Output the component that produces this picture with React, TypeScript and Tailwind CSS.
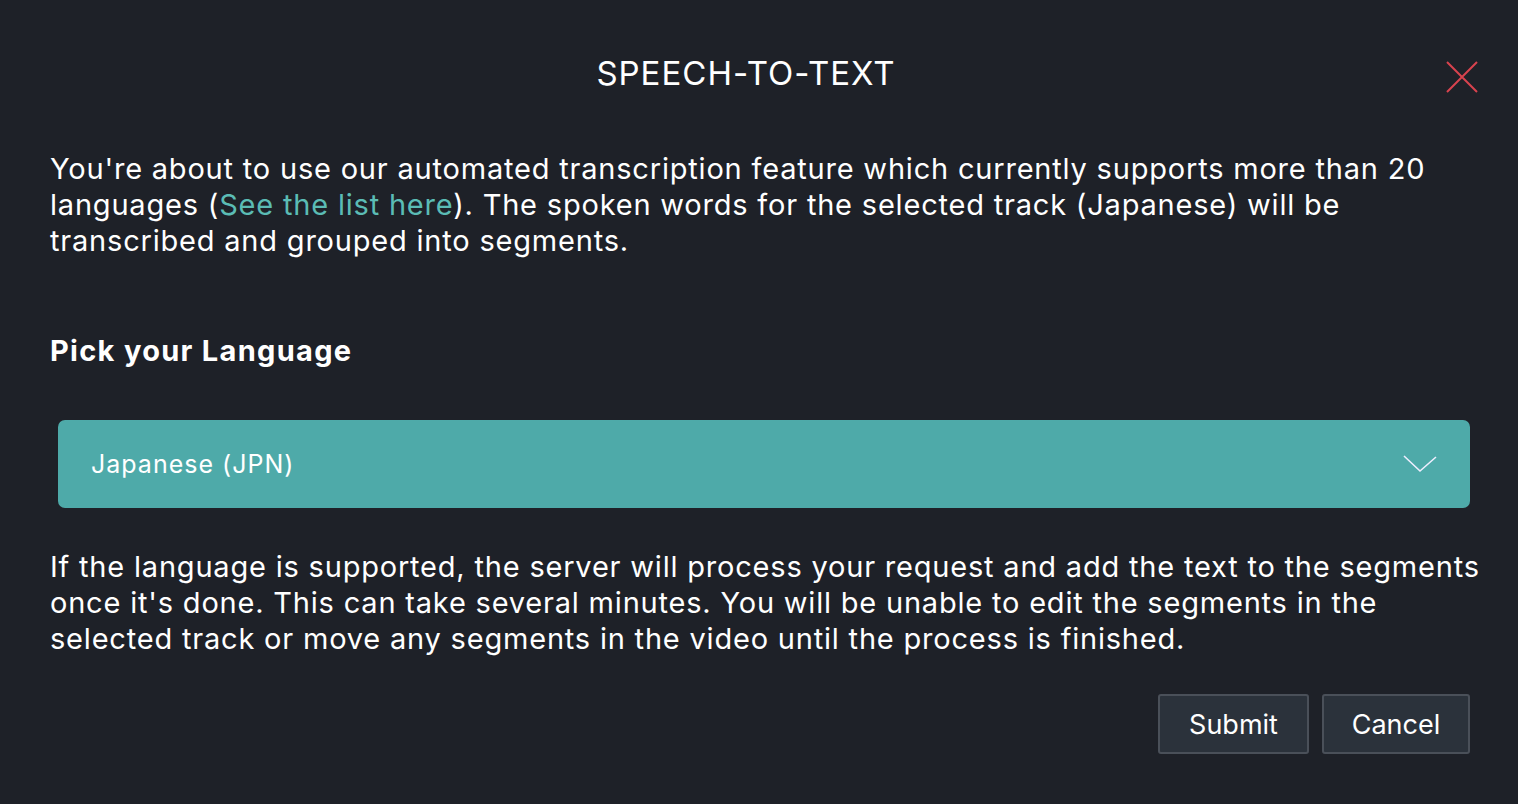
import React from "react";

export default function App() {
  return (
    <div
      className="w-[1518px] h-[804px] bg-[#1e2128] text-white overflow-hidden"
      style={{ fontFamily: "Inter, 'Noto Sans', sans-serif" }}
    >
      <div className="relative flex flex-col pl-[50px] pr-[48px]">
        <div className="h-[146px] flex items-start justify-center pt-[52px] pr-[28px]">
          <h1 className="text-[33px] leading-[42px] font-normal tracking-[1px]">SPEECH-TO-TEXT</h1>
        </div>
        <button className="absolute right-[40px] top-[61px] w-[32px] h-[32px]" aria-label="Close">
          <svg viewBox="0 0 32 32" width="32" height="32">
            <path d="M1 1 L31 31 M31 1 L1 31" stroke="#d8434e" strokeWidth="2" fill="none" />
          </svg>
        </button>
        <p className="text-[29px] leading-[36px] mt-[5px] tracking-[0.8px]">
          You're about to use our automated transcription feature which currently supports more than 20
          languages (<span className="text-[#5bbcb5]">See the list here</span>). The spoken words for the selected track
          (Japanese) will be transcribed and grouped into segments.
        </p>
        <h2 className="text-[29px] leading-[36px] font-bold mt-[74px] tracking-[1.3px]">Pick your Language</h2>
        <div className="ml-[8px] mt-[51px] h-[88px] rounded-[7px] bg-[#4eaaa9] flex items-center justify-between pl-[33px] pr-[33px]">
          <span className="text-[25px] tracking-[1px] pt-[2px]">Japanese (JPN)</span>
          <svg width="34" height="18" viewBox="0 0 34 18">
            <path d="M1 1 L17 16 L33 2" stroke="#eef" strokeWidth="1.6" fill="none" />
          </svg>
        </div>
        <p className="text-[29px] leading-[36px] mt-[41px] mr-[-22px] tracking-[0.8px]">
          If the language is supported, the server will process your request and add the text to the segments
          once it's done. This can take several minutes. You will be unable to edit the segments in the
          selected track or move any segments in the video until the process is finished.
        </p>
        <div className="flex justify-end gap-[13px] mt-[37px]">
          <button className="w-[151px] h-[60px] bg-[#2b323b] border-2 border-[#4a5059] rounded-[3px] text-[27px] pt-[2px]">
            Submit
          </button>
          <button className="w-[148px] h-[60px] bg-[#2b323b] border-2 border-[#4a5059] rounded-[3px] text-[27px] pt-[2px]">
            Cancel
          </button>
        </div>
      </div>
    </div>
  );
}
